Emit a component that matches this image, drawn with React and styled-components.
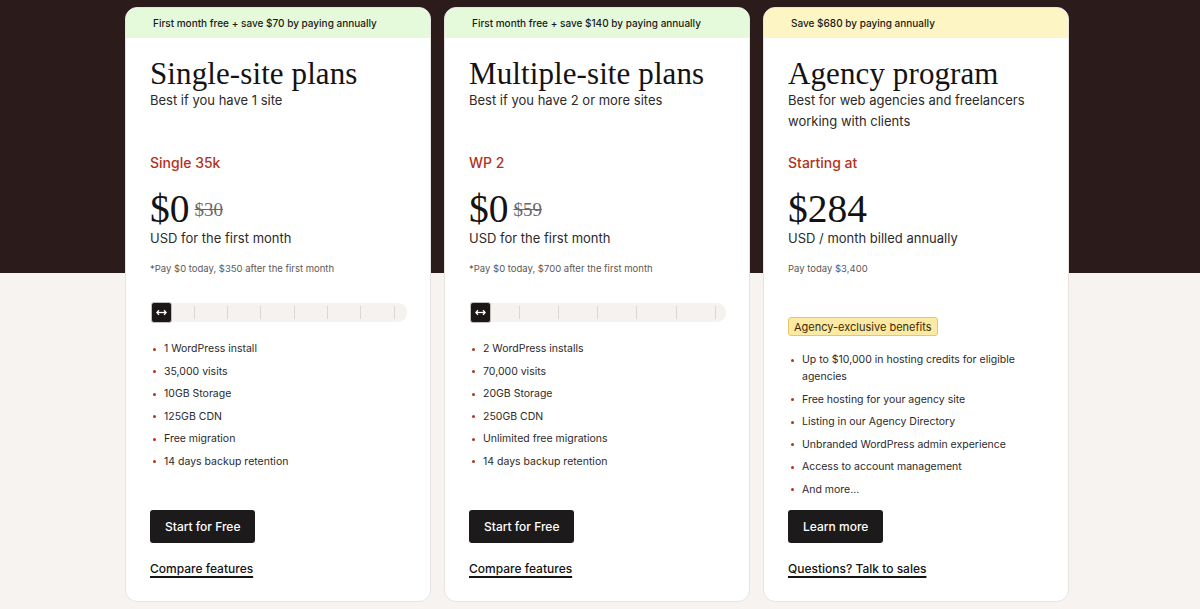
import React from 'react';
import styled, { createGlobalStyle } from 'styled-components';

const GlobalStyle = createGlobalStyle`
	html, body {
		margin: 0;
		padding: 0;
	}
	body {
		font-family: 'Inter', 'Liberation Sans', sans-serif;
		color: #1d1b1b;
	}
`;

const plans = [
	{
		id: 'single',
		banner: 'First month free + save $70 by paying annually',
		tone: 'green',
		title: 'Single-site plans',
		subtitle: 'Best if you have 1 site',
		label: 'Single 35k',
		price: '$0',
		oldPrice: '$30',
		period: 'USD for the first month',
		note: '*Pay $0 today, $350 after the first month',
		slider: { step: 33.3, ticks: 7 },
		features: [
			'1 WordPress install',
			'35,000 visits',
			'10GB Storage',
			'125GB CDN',
			'Free migration',
			'14 days backup retention',
		],
		cta: 'Start for Free',
		link: 'Compare features',
	},
	{
		id: 'multi',
		banner: 'First month free + save $140 by paying annually',
		tone: 'green',
		title: 'Multiple-site plans',
		subtitle: 'Best if you have 2 or more sites',
		label: 'WP 2',
		price: '$0',
		oldPrice: '$59',
		period: 'USD for the first month',
		note: '*Pay $0 today, $700 after the first month',
		slider: { step: 39.2, ticks: 6 },
		features: [
			'2 WordPress installs',
			'70,000 visits',
			'20GB Storage',
			'250GB CDN',
			'Unlimited free migrations',
			'14 days backup retention',
		],
		cta: 'Start for Free',
		link: 'Compare features',
	},
	{
		id: 'agency',
		banner: 'Save $680 by paying annually',
		tone: 'yellow',
		title: 'Agency program',
		subtitle: 'Best for web agencies and freelancers working with clients',
		label: 'Starting at',
		price: '$284',
		period: 'USD / month billed annually',
		note: 'Pay today $3,400',
		badge: 'Agency-exclusive benefits',
		features: [
			'Up to $10,000 in hosting credits for eligible agencies',
			'Free hosting for your agency site',
			'Listing in our Agency Directory',
			'Unbranded WordPress admin experience',
			'Access to account management',
			'And more...',
		],
		cta: 'Learn more',
		link: 'Questions? Talk to sales',
	},
];

const ArrowsIcon = () => (
	<svg width="11" height="7" viewBox="0 0 11 7" fill="none">
		<path d="M1 3.5h9" stroke="#fff" strokeWidth="1.3" />
		<path d="M3 1.2L0.9 3.5 3 5.8" stroke="#fff" strokeWidth="1.3" />
		<path d="M8 1.2l2.1 2.3L8 5.8" stroke="#fff" strokeWidth="1.3" />
	</svg>
);

const PlanCard = ({ plan }) => (
	<Card>
		<Banner $tone={plan.tone}>{plan.banner}</Banner>
		<Body>
			<Header>
				<Title>{plan.title}</Title>
				<Subtitle>{plan.subtitle}</Subtitle>
			</Header>
			<Label>{plan.label}</Label>
			<PriceRow>
				<Price>{plan.price}</Price>
				{plan.oldPrice && <OldPrice>{plan.oldPrice}</OldPrice>}
			</PriceRow>
			<Period>{plan.period}</Period>
			<Note>{plan.note}</Note>

			{plan.slider ? (
				<Slider>
					<Thumb>
						<ArrowsIcon />
					</Thumb>
					{Array.from({ length: plan.slider.ticks }).map((_, i) => (
						<Tick key={i} style={{ left: 10.5 + (i + 1) * plan.slider.step }} />
					))}
				</Slider>
			) : (
				<Badge>{plan.badge}</Badge>
			)}

			<FeatureList $agency={!plan.slider}>
				{plan.features.map((f) => (
					<Feature key={f}>{f}</Feature>
				))}
			</FeatureList>

			<Footer>
				<Button>{plan.cta}</Button>
				<TextLink href="#">{plan.link}</TextLink>
			</Footer>
		</Body>
	</Card>
);

const App = () => (
	<>
		<GlobalStyle />
		<Page>
			<Cards>
				{plans.map((p) => (
					<PlanCard key={p.id} plan={p} />
				))}
			</Cards>
		</Page>
	</>
);

export default App;

const Page = styled.div`
	min-height: 609px;
	background: linear-gradient(to bottom, #2c1b1b 0, #2c1b1b 273px, #f7f3f1 273px);
	padding: 7px 0 0 125px;
	box-sizing: border-box;
`;

const Cards = styled.div`
	display: flex;
	gap: 13px;
	align-items: stretch;
`;

const Card = styled.div`
	box-sizing: border-box;
	width: 306px;
	height: 595px;
	background: #fff;
	border: 1px solid #e8e3e0;
	border-radius: 12px;
	overflow: hidden;
	display: flex;
	flex-direction: column;
`;

const Banner = styled.div`
	height: 30px;
	flex-shrink: 0;
	display: flex;
	align-items: center;
	padding: 0 27px;
	font-size: 10px;
	font-weight: 500;
	color: #1c1a1a;
	background: ${(p) => (p.$tone === 'yellow' ? '#fdf5c3' : '#e5fadb')};
`;

const Body = styled.div`
	flex: 1;
	display: flex;
	flex-direction: column;
	padding: 19px 23px 22px 24px;
`;

const Header = styled.div`
	min-height: 96px;
`;

const Title = styled.h2`
	margin: 0;
	font-family: 'Liberation Serif', 'Times New Roman', serif;
	font-weight: 400;
	font-size: 31px;
	line-height: 33px;
	color: #141212;
	letter-spacing: 0.1px;
`;

const Subtitle = styled.p`
	margin: 0;
	font-size: 13px;
	line-height: 21px;
	color: #2c2a2a;
	max-width: 240px;
`;

const Label = styled.div`
	font-size: 14px;
	line-height: 20px;
	font-weight: 500;
	color: #b3321b;
`;

const PriceRow = styled.div`
	display: flex;
	align-items: center;
	gap: 5px;
	margin-top: 17px;
	height: 38px;
`;

const Price = styled.span`
	font-family: 'Liberation Serif', 'Times New Roman', serif;
	font-size: 39.5px;
	line-height: 38px;
	color: #141212;
`;

const OldPrice = styled.span`
	font-family: 'Liberation Serif', 'Times New Roman', serif;
	font-size: 19px;
	color: #6c6866;
	text-decoration: line-through;
	margin-top: 2px;
`;

const Period = styled.div`
	font-size: 13px;
	line-height: 20px;
	color: #2c2a2a;
`;

const Note = styled.div`
	margin-top: 14px;
	font-size: 9.5px;
	line-height: 14px;
	color: #5c5856;
`;

const Slider = styled.div`
	position: relative;
	margin-top: 25px;
	height: 22px;
	display: flex;
	align-items: center;
	&::before {
		content: '';
		position: absolute;
		left: 10px;
		right: 0;
		top: 2px;
		bottom: 1px;
		background: #f6f2f0;
		border-radius: 0 9px 9px 0;
	}
`;

const Thumb = styled.div`
	position: relative;
	z-index: 1;
	box-sizing: border-box;
	width: 21px;
	height: 21px;
	background: #1b1717;
	border: 1px solid #c4bfbc;
	border-radius: 3px;
	margin-left: 1px;
	display: flex;
	align-items: center;
	justify-content: center;
`;

const Tick = styled.span`
	position: absolute;
	top: 5px;
	width: 1px;
	height: 13px;
	background: #dcd7d4;
`;

const Badge = styled.div`
	align-self: flex-start;
	margin-top: 41px;
	padding: 0 5px;
	height: 19px;
	box-sizing: border-box;
	display: flex;
	align-items: center;
	font-size: 11px;
	color: #3b2b05;
	background: #fce9a3;
	border: 1px solid #e6c763;
	border-radius: 3px;
`;

const FeatureList = styled.ul`
	list-style: none;
	margin: ${(p) => (p.$agency ? '15px' : '17px')} 0 0 0;
	padding: 0 0 0 14px;
	display: flex;
	flex-direction: column;
	gap: 5.5px;
`;

const Feature = styled.li`
	position: relative;
	font-size: 10.5px;
	line-height: 17px;
	color: #2c2a2a;
	padding-right: 8px;
	&::before {
		content: '';
		position: absolute;
		left: -11px;
		top: 7.5px;
		width: 3px;
		height: 3px;
		border-radius: 50%;
		background: #b3321b;
	}
`;

const Footer = styled.div`
	margin-top: auto;
	display: flex;
	flex-direction: column;
	align-items: flex-start;
	gap: 16px;
`;

const Button = styled.button`
	height: 33px;
	padding: 0 15px;
	border: none;
	border-radius: 3px;
	background: #1c1a1a;
	color: #fff;
	font-family: 'Inter', 'Liberation Sans', sans-serif;
	font-size: 12px;
	font-weight: 500;
	cursor: pointer;
`;

const TextLink = styled.a`
	font-size: 12px;
	line-height: 20px;
	font-weight: 500;
	color: #141212;
	text-decoration: underline;
	text-decoration-thickness: 1.5px;
	text-underline-offset: 3px;
`;
